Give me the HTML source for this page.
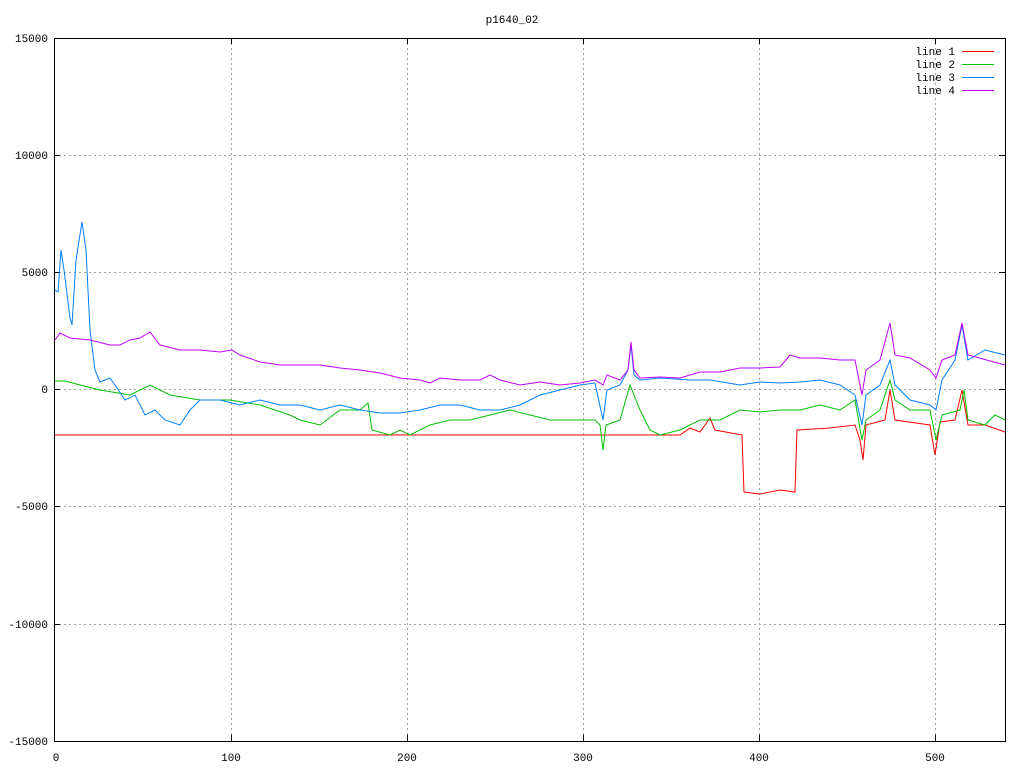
<!DOCTYPE html><html><head><style>body{margin:0;background:#fff}svg{display:block}text{font-family:"Liberation Mono",monospace;font-size:11px;fill:#000}</style></head><body>
<svg width="1024" height="768" xmlns="http://www.w3.org/2000/svg">
<g stroke="#a0a0a0" stroke-dasharray="2,3" stroke-width="1" shape-rendering="crispEdges">
<line x1="231.5" y1="38" x2="231.5" y2="741"/><line x1="407.5" y1="38" x2="407.5" y2="741"/><line x1="583.5" y1="38" x2="583.5" y2="741"/><line x1="759.5" y1="38" x2="759.5" y2="741"/><line x1="935.5" y1="38" x2="935.5" y2="741"/>
<line x1="54" y1="155.5" x2="1005" y2="155.5"/><line x1="54" y1="272.5" x2="1005" y2="272.5"/><line x1="54" y1="389.5" x2="1005" y2="389.5"/><line x1="54" y1="506.5" x2="1005" y2="506.5"/><line x1="54" y1="624.5" x2="1005" y2="624.5"/>
</g>
<g shape-rendering="crispEdges">
<rect x="54.5" y="38.5" width="951" height="703" fill="none" stroke="#000"/>
<g stroke="#000"><line x1="54" y1="155.5" x2="60" y2="155.5"/><line x1="54" y1="272.5" x2="60" y2="272.5"/><line x1="54" y1="389.5" x2="60" y2="389.5"/><line x1="54" y1="506.5" x2="60" y2="506.5"/><line x1="54" y1="624.5" x2="60" y2="624.5"/>
<line x1="999" y1="155.5" x2="1005" y2="155.5"/><line x1="999" y1="272.5" x2="1005" y2="272.5"/><line x1="999" y1="389.5" x2="1005" y2="389.5"/><line x1="999" y1="506.5" x2="1005" y2="506.5"/><line x1="999" y1="624.5" x2="1005" y2="624.5"/>
<line x1="231.5" y1="741" x2="231.5" y2="735"/><line x1="407.5" y1="741" x2="407.5" y2="735"/><line x1="583.5" y1="741" x2="583.5" y2="735"/><line x1="759.5" y1="741" x2="759.5" y2="735"/><line x1="935.5" y1="741" x2="935.5" y2="735"/>
<line x1="231.5" y1="38" x2="231.5" y2="44"/><line x1="407.5" y1="38" x2="407.5" y2="44"/><line x1="583.5" y1="38" x2="583.5" y2="44"/><line x1="759.5" y1="38" x2="759.5" y2="44"/><line x1="935.5" y1="38" x2="935.5" y2="44"/></g>
<line x1="962" y1="51.5" x2="994" y2="51.5" stroke="#f00"/><line x1="962" y1="64.5" x2="994" y2="64.5" stroke="#00c000"/><line x1="962" y1="77.5" x2="994" y2="77.5" stroke="#0080ff"/><line x1="962" y1="90.5" x2="994" y2="90.5" stroke="#c000ff"/>
</g>
<text x="512" y="23" text-anchor="middle">p1640_02</text>
<g text-anchor="end"><text x="48" y="42">15000</text><text x="48" y="159">10000</text><text x="48" y="276">5000</text><text x="48" y="393">0</text><text x="48" y="510">-5000</text><text x="48" y="628">-10000</text><text x="48" y="745">-15000</text></g>
<g text-anchor="middle"><text x="56" y="761">0</text><text x="231" y="761">100</text><text x="407" y="761">200</text><text x="583" y="761">300</text><text x="759" y="761">400</text><text x="935" y="761">500</text></g>
<g text-anchor="end"><text x="955" y="55">line 1</text><text x="955" y="68">line 2</text><text x="955" y="81">line 3</text><text x="955" y="94">line 4</text></g>
<g fill="none" stroke-width="1">
<polyline stroke="#f00" points="55,435 680,435 690,428 700,432 710,418 715,430 742,435 744,492 760,494 780,490 795,492 797,430 830,428 855,425 860,440 863,460 866,425 885,420 890,390 895,420 930,425 935,455 940,422 955,420 962,390 968,425 985,425 1005,432"/>
<polyline stroke="#00c000" points="55,381 65,381 80,385 100,390 130,395 150,385 170,395 200,400 230,400 260,405 290,415 300,420 320,425 340,410 360,410 368,403 372,430 390,435 400,430 410,435 430,425 450,420 470,420 490,415 510,410 530,415 550,420 580,420 595,420 600,425 603,450 606,425 620,420 630,385 640,410 650,430 660,435 680,430 700,420 720,420 740,410 760,412 780,410 800,410 820,405 840,410 855,400 862,440 866,420 880,410 890,380 895,400 910,410 930,410 936,440 942,415 960,410 964,390 968,420 985,425 995,415 1005,420"/>
<polyline stroke="#0080ff" points="55,290 58,292 61,250 64,270 70,318 72,325 76,260 82,222 86,250 90,330 95,370 100,382 110,378 115,385 125,400 135,395 145,415 155,410 165,420 180,425 190,410 200,400 220,400 240,405 260,400 280,405 300,405 320,410 340,405 360,410 380,413 400,413 420,410 440,405 460,405 480,410 500,410 520,405 540,395 560,390 580,385 595,383 603,420 607,390 620,385 628,370 631,345 634,375 640,380 660,378 690,380 710,380 740,385 760,382 780,383 800,382 820,380 840,385 855,395 862,425 866,395 880,385 890,360 895,385 910,400 930,405 936,410 942,380 955,360 962,325 968,360 985,350 1005,355"/>
<polyline stroke="#c000ff" points="55,340 60,333 70,338 90,340 110,345 120,345 130,340 140,338 150,332 160,345 180,350 200,350 220,352 232,350 240,355 260,362 280,365 300,365 320,365 340,368 360,370 380,373 400,378 420,380 430,383 440,378 460,380 480,380 490,375 500,380 520,385 540,382 560,385 580,383 595,380 603,385 607,375 620,380 628,370 631,342 634,370 640,378 660,377 680,378 700,372 720,372 740,368 760,368 780,367 790,355 800,358 820,358 840,360 855,360 862,395 866,370 880,360 890,323 895,355 910,358 930,370 936,378 942,360 955,355 962,323 968,355 1005,365"/>
</g>
</svg></body></html>
